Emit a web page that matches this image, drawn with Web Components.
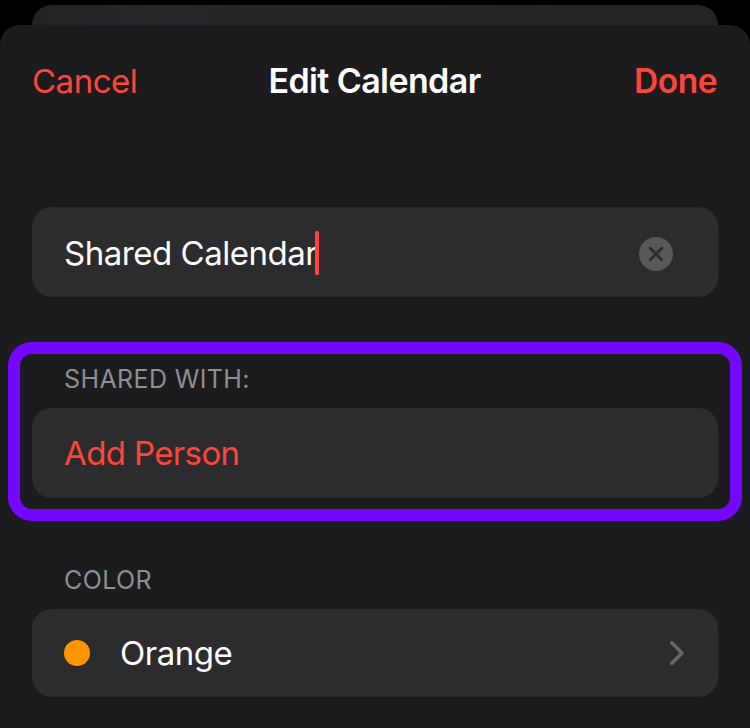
<!DOCTYPE html>
<html lang="en"><head><meta charset="utf-8"><title>Edit Calendar</title>
<style>html,body{margin:0;background:#000;overflow:hidden}body{font-family:Inter,sans-serif;width:750px;height:728px}</style></head><body>
<edit-calendar></edit-calendar>
<script>
const define=(name,html)=>customElements.define(name,class extends HTMLElement{constructor(){super();this.attachShadow({mode:'open'}).innerHTML=html;}});
define('nav-bar',`<style>:host{display:grid;grid-template-columns:1fr auto 1fr;align-items:center;box-sizing:border-box;height:112px;padding:0 33px 0 32px;font-size:34px;line-height:40px;color:#ff453a;white-space:nowrap}
.t{color:#fff;font-weight:600;letter-spacing:-.6px}.d{justify-self:end;font-weight:600;font-size:33.5px;letter-spacing:-.5px}.c{font-size:33px;letter-spacing:-.5px}</style><span class="c"><slot name="left"></slot></span><span class="t"><slot></slot></span><span class="d"><slot name="right"></slot></span>`);
define('form-row',`<style>:host{display:flex;align-items:center;box-sizing:border-box;height:90px;padding:2px 32px 0;border-radius:20px;background:#2c2c2e;color:#fff;font-size:33px;line-height:40px;letter-spacing:-.47px;white-space:nowrap}.e{margin-left:auto;display:flex}</style><slot></slot><span class="e"><slot name="end"></slot></span>`);
define('section-label',`<style>:host{display:block;padding-left:32px;color:#8e8e93;font-size:25px;line-height:32px;letter-spacing:.38px}</style><slot></slot>`);
define('text-caret',`<style>:host{display:block;width:4px;height:44px;background:#ff453a;border-radius:1.5px;margin-left:-2px}</style>`);
define('clear-button',`<style>:host{display:block;width:34px;height:34px;margin:2px 13px 0 0}svg{display:block}</style><svg width="34" height="34" viewBox="0 0 34 34"><circle cx="17" cy="17" r="17" fill="#58585a"/><path d="M11.3 11.3l11.4 11.4m0-11.4l-11.4 11.4" stroke="#2c2c2e" stroke-width="2.8" stroke-linecap="round"/></svg>`);
define('chevron-icon',`<style>:host{display:block;margin-right:1px}svg{display:block}</style><svg width="16" height="26" viewBox="0 0 16 26"><path d="M2.8 2.8L13 13 2.8 23.2" fill="none" stroke="#68686c" stroke-width="3.6" stroke-linecap="round" stroke-linejoin="round"/></svg>`);
define('color-dot',`<style>:host{display:block;width:26px;height:26px;border-radius:50%;background:#ff9500;margin-right:30px}</style>`);
define('highlight-frame',`<style>:host{display:block;box-sizing:border-box;height:179px;margin:45px 8px 0;border:12px solid #7408ff;border-radius:24px;padding:9px 12px 0}</style><slot></slot>`);
define('edit-calendar',`<style>:host{display:block;height:728px;overflow:hidden;background:#000}.back{height:20px;margin:5px 32px 0;border-radius:20px 20px 0 0;background:linear-gradient(90deg,#212223,#22282b 18%,#242525 32%,#252525 65%,#262323 80%,#252424)}.sheet{height:703px;background:#1c1c1e;border-radius:20px 20px 0 0}.wrap{display:flow-root}.name{margin:70px 32px 0}.add{margin-top:13px;padding-top:0;color:#ff453a;letter-spacing:-.63px}.lab{margin:43px 32px 13px}.color{margin:0 32px;height:88px;padding-top:0}</style>
<div class="wrap"><div class="back"></div><div class="sheet"><nav-bar><span slot="left">Cancel</span>Edit Calendar<span slot="right">Done</span></nav-bar>
<form-row class="name">Shared Calendar<text-caret></text-caret><clear-button slot="end"></clear-button></form-row>
<highlight-frame><section-label>SHARED WITH:</section-label><form-row class="add">Add Person</form-row></highlight-frame>
<section-label class="lab">COLOR</section-label><form-row class="color"><color-dot></color-dot>Orange<chevron-icon slot="end"></chevron-icon></form-row></div></div>`);
</script></body></html>
